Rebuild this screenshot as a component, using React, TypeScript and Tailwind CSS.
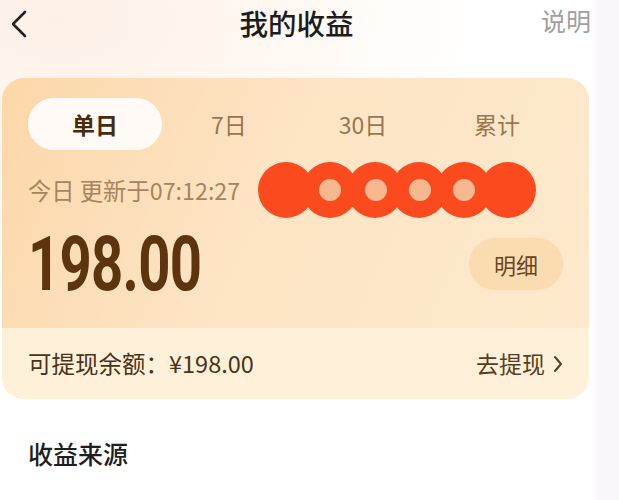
import React, { useState } from 'react';

const tabs = ['单日', '7日', '30日', '累计'];

const font = 'font-["Noto_Sans_CJK_SC","Noto_Sans",sans-serif]';

export default function App() {
  const [active, setActive] = useState(0);

  return (
    <div
      className={`w-[619px] h-[500px] overflow-hidden bg-white ${font}`}
      style={{
        backgroundImage:
          'radial-gradient(ellipse 420px 260px at 60px 20px, #fdf0e6 0%, #fff9f4 60%, rgba(255,255,255,0) 100%), linear-gradient(90deg, #ffffff 0px, #ffffff 592px, #f9f7fa 598px)',
      }}
    >
      {/* header */}
      <div className="relative flex h-[46px] items-center justify-center pr-[26px]">
        <button className="absolute left-[6px] top-[6px] p-1">
          <svg width="18" height="28" viewBox="0 0 18 28" fill="none">
            <path d="M15 2L3 14L15 26" stroke="#222" strokeWidth="2.6" strokeLinecap="round" strokeLinejoin="round" />
          </svg>
        </button>
        <h1 className="text-[28.5px] font-medium leading-none text-[#1c1c1c]">我的收益</h1>
        <span className="absolute right-[28px] top-[8px] text-[25px] leading-none text-[#a0a0a0]">说明</span>
      </div>

      {/* card */}
      <div
        className="ml-[2px] mt-[32px] w-[587px] h-[321px] overflow-hidden rounded-[22px] flex flex-col"
        style={{ backgroundImage: 'linear-gradient(115deg, #fcd7a9 0%, #fde5c6 45%, #fde9cc 100%)' }}
      >
        <div className="flex-1 px-[26px] pt-[20px]">
          <div className="grid grid-cols-4 w-[536px]">
            {tabs.map((t, i) => (
              <button
                key={t}
                onClick={() => setActive(i)}
                className={`h-[52px] rounded-full text-[23px] ${
                  active === i ? 'bg-[#fffaf5] font-bold text-[#4a2a0c]' : 'text-[#9a7650]'
                }`}
              >
                {t}
              </button>
            ))}
          </div>

          <div className="mt-[12px] flex items-center h-[56px]">
            <span className="text-[23.3px] text-[#a8845e] whitespace-nowrap">今日 更新于07:12:27</span>
            <svg width="280" height="58" viewBox="0 0 280 58" className="ml-[18px] shrink-0">
              {[28, 72, 117, 161, 206, 250].map((cx) => (
                <circle key={cx} cx={cx} cy={29} r={28} fill="#fb4a1e" />
              ))}
              {[72, 118, 162, 206].map((cx) => (
                <circle key={cx} cx={cx} cy={29} r={11} fill="#f7b890" />
              ))}
            </svg>
          </div>

          <div className="mt-[8px] flex items-center justify-between">
            <span className='inline-block origin-left scale-x-[0.74] font-["Roboto",sans-serif] text-[76px] font-bold leading-none tracking-[-1px] text-[#5c350f]'>
              198.00
            </span>
            <button className="h-[52px] w-[94px] rounded-full bg-[#fbdcb0] text-[22px] text-[#6a4420]">明细</button>
          </div>
        </div>

        <div className="h-[71px] flex items-center justify-between bg-[#fff1d9] px-[26px]">
          <span className="text-[23.5px] text-[#4a3318]">可提现余额：¥198.00</span>
          <span className="flex items-center gap-[8px] text-[23px] text-[#5a3d1e]">
            去提现
            <svg width="10" height="18" viewBox="0 0 10 18" fill="none">
              <path d="M2 2L8 9L2 16" stroke="#5a3d1e" strokeWidth="2" strokeLinecap="round" strokeLinejoin="round" />
            </svg>
          </span>
        </div>
      </div>

      <div className="px-[28px] pt-[36px] text-[25px] font-medium text-[#1f1f1f]">收益来源</div>
    </div>
  );
}
